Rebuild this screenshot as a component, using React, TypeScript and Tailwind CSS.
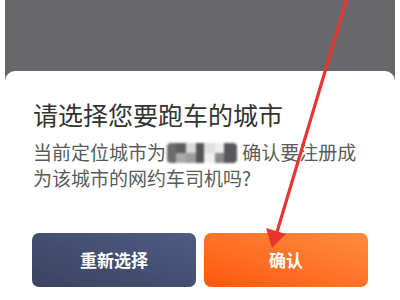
const Arrow = () => (
  <svg className="absolute left-0 top-0 pointer-events-none" width="400" height="300" viewBox="0 0 400 300">
    <line x1="347" y1="-2" x2="277" y2="232" stroke="#e8352f" strokeWidth="3.2" strokeLinecap="round" />
    <polygon points="272,248 266,228 286,234" fill="#e8352f" />
  </svg>
)

const Mosaic = () => (
  <span className="inline-flex align-middle h-[20px] w-[70px] mx-[1px] -mt-[3px] rounded-[4px] overflow-hidden blur-[1.2px]">
    <span className="w-[9px] bg-[#6c6c6c]" />
    <span className="w-[10px] flex flex-col">
      <span className="h-1/2 bg-[#5e5e5e]" />
      <span className="h-1/2 bg-[#a9a9a9]" />
    </span>
    <span className="w-[10px] flex flex-col">
      <span className="h-1/2 bg-[#d9d9d9]" />
      <span className="h-1/2 bg-[#9b9b9b]" />
    </span>
    <span className="w-[8px] bg-[#555555]" />
    <span className="w-[11px] flex flex-col">
      <span className="h-1/2 bg-[#e0e0e0]" />
      <span className="h-1/2 bg-[#f0f0f0]" />
    </span>
    <span className="w-[9px] flex flex-col">
      <span className="h-1/2 bg-[#eeeeee]" />
      <span className="h-1/2 bg-[#8a8a8a]" />
    </span>
    <span className="w-[13px] bg-[#58585c]" />
  </span>
)

export default function App() {
  return (
    <div className="relative w-[400px] h-[300px] bg-white px-[5px] overflow-hidden" style={{ fontFamily: '"Noto Sans CJK SC", "Noto Sans", sans-serif' }}>
      <div className="h-full bg-[#68676b] pt-[71px] flex flex-col">
        <div className="flex-1 bg-white rounded-t-[10px] px-[27px] pt-[27px]">
          <h1 className="text-[25px] leading-[32px] text-[#333333] pl-[1px]">请选择您要跑车的城市</h1>
          <p className="mt-[9px] text-[19px] leading-[26px] text-[#5a5a5a] pl-[1px]">
            当前定位城市为<Mosaic /> 确认要注册成<br />为该城市的网约车司机吗?
          </p>
          <div className="mt-[42px] flex gap-[8px]">
            <button className="flex-1 h-[54px] rounded-[7px] bg-gradient-to-tr from-[#3a4360] to-[#4e5c82] text-white text-[17px] font-bold">重新选择</button>
            <button className="flex-1 h-[54px] rounded-[7px] bg-gradient-to-tr from-[#ff5508] to-[#ff8c3c] text-white text-[17px] font-bold">确认</button>
          </div>
        </div>
      </div>
      <Arrow />
    </div>
  )
}
